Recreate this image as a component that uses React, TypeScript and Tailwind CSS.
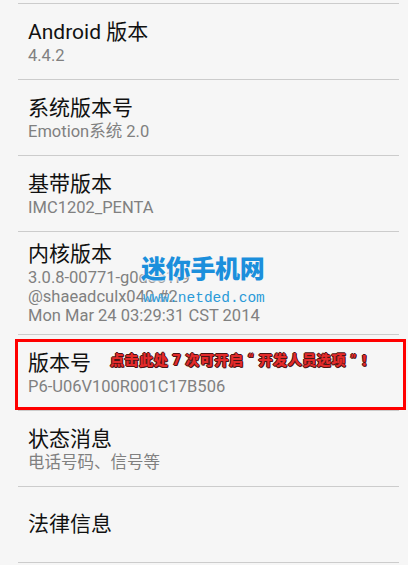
const ITEMS: { title: string; lines: string[] }[] = [
  { title: 'Android 版本', lines: ['4.4.2'] },
  { title: '系统版本号', lines: ['Emotion系统 2.0'] },
  { title: '基带版本', lines: ['IMC1202_PENTA'] },
  {
    title: '内核版本',
    lines: ['3.0.8-00771-g0d3c1f9', '@shaeadculx040 #2', 'Mon Mar 24 03:29:31 CST 2014'],
  },
  { title: '版本号', lines: ['P6-U06V100R001C17B506'] },
  { title: '状态消息', lines: ['电话号码、信号等'] },
  { title: '法律信息', lines: [] },
];

function Row({ title, lines, marked }: { title: string; lines: string[]; marked?: boolean }) {
  return (
    <div className="relative">
      <div className="h-px bg-[#cccccc]" />
      <div className="min-h-[75px] flex flex-col justify-center py-[9px] pl-[10px]">
        <div className="text-[21px] leading-[27px] text-[#111111]">{title}</div>
        {lines.map((l) => (
          <div key={l} className="text-[16.5px] leading-[19px] text-[#808080] whitespace-nowrap">
            {l}
          </div>
        ))}
      </div>
      {marked && (
        <>
          {/* red frame around the build number row */}
          <div className="absolute left-[-3px] right-[-7px] top-[5px] h-[71px] border-[3px] border-[#ff0000]" />
          <div className="absolute left-[92px] top-[16px] text-[14px] leading-[20px] font-black tracking-[0.6px] text-[#e42b2b] whitespace-nowrap [text-shadow:1px_0_#4d1515,-1px_0_#4d1515,0_1px_#4d1515,0_-1px_#4d1515,1px_1px_#4d1515]">
            点击此处 7 次可开启 “ 开发人员选项 ” ！
          </div>
        </>
      )}
    </div>
  );
}

export default function App() {
  return (
    <div
      className="relative w-[408px] h-[565px] overflow-hidden bg-[#f6f6f6] pt-[3px] pl-[18px] pr-[9px]"
      style={{ fontFamily: 'Roboto, "Noto Sans CJK SC", sans-serif' }}
    >
      {ITEMS.map((it, i) => (
        <Row key={it.title} title={it.title} lines={it.lines} marked={i === 4} />
      ))}
      <div className="h-px bg-[#cccccc]" />

      {/* watermark */}
      <div className="absolute left-[141px] top-[256px] flex flex-col items-start">
        <div className="text-[25px] leading-[27px] font-black text-[#1b8fdc] tracking-[-0.3px] [text-shadow:0_0_2px_#f6f6f6,0_0_3px_#f6f6f6,0_0_4px_#f6f6f6]">
          迷你手机网
        </div>
        <div
          className="mt-[6px] text-[14.5px] leading-[18px] text-[#2a9ad8] ml-[2px] [text-shadow:0_0_2px_#f6f6f6]"
          style={{ fontFamily: '"Liberation Mono", monospace' }}
        >
          www.netded.com
        </div>
      </div>
    </div>
  );
}
